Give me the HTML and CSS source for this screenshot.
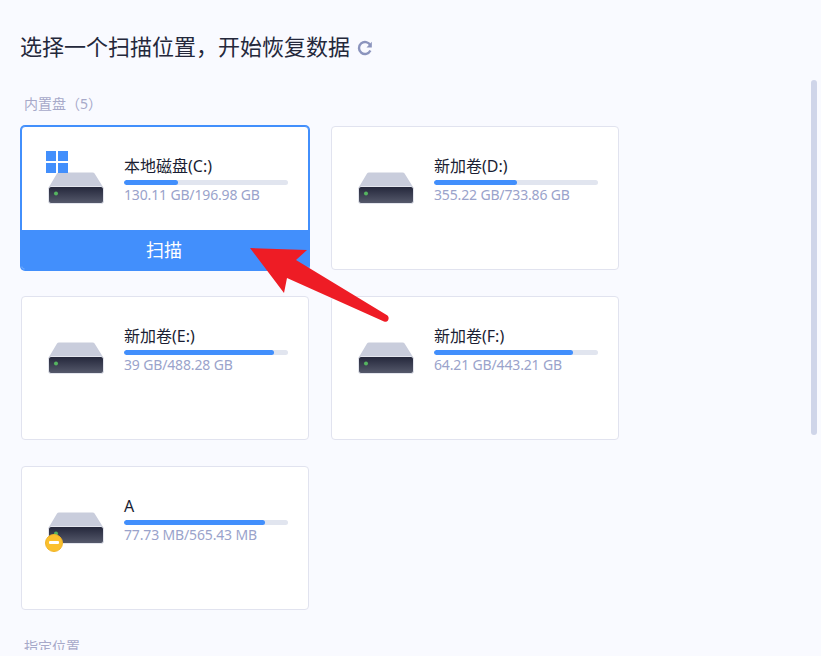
FILE: index.html
```html
<!DOCTYPE html>
<html lang="zh-CN">

<head>
    <meta charset="UTF-8">
    <title>选择一个扫描位置</title>
    <link rel="stylesheet" href="styles.css">
</head>

<body>
    <svg width="0" height="0" class="defs">
        <defs>
            <linearGradient id="driveFront" x1="0" y1="0" x2="0" y2="1">
                <stop offset="0" stop-color="#23263a" />
                <stop offset="1" stop-color="#565a6c" />
            </linearGradient>
            <symbol id="drive" viewBox="0 0 56 32">
                <path d="M9 1.5Q9.6 0.5 11 0.5H44.500Q46 0.5 46.600 1.500L55 15H1Z" fill="#c9cddc" />
                <rect x="0.500" y="14.500" width="55" height="17" rx="2.500" fill="url(#driveFront)" stroke="#e4e6ee" />
                <circle cx="8" cy="21.500" r="2" fill="#55b45f" />
            </symbol>
        </defs>
    </svg>

    <main class="page">
        <h1 class="title">选择一个扫描位置，开始恢复数据
            <svg class="refresh" width="16" height="16" viewBox="0 0 16 16">
                <path d="M13.300 5.200A6 6 0 1 0 13.400 10.600" fill="none" stroke="#8b94bd" stroke-width="2.400" />
                <path d="M14.800 1.800V7.400H9.500Z" fill="#8b94bd" />
            </svg>
        </h1>

        <h2 class="group-label">内置盘（5）</h2>
        <div class="drive-grid">
            <div class="card selected">
                <div class="card-body">
                    <div class="drive-icon">
                        <svg class="win-logo" width="22" height="22" viewBox="0 0 22 22">
                            <path d="M0 0H10V10H0ZM12 0H22V10H12ZM0 12H10V22H0ZM12 12H22V22H12Z" fill="#428ffc" />
                        </svg>
                        <svg width="56" height="32"><use href="#drive" /></svg>
                    </div>
                    <div class="drive-info">
                        <div class="drive-name">本地磁盘(C:)</div>
                        <div class="bar"><div class="bar-fill" style="width: 33%"></div></div>
                        <div class="drive-size">130.11 GB/196.98 GB</div>
                    </div>
                </div>
                <button class="scan-btn">扫描</button>
            </div>

            <div class="card">
                <div class="card-body">
                    <div class="drive-icon"><svg width="56" height="32"><use href="#drive" /></svg></div>
                    <div class="drive-info">
                        <div class="drive-name">新加卷(D:)</div>
                        <div class="bar"><div class="bar-fill" style="width: 50.500%"></div></div>
                        <div class="drive-size">355.22 GB/733.86 GB</div>
                    </div>
                </div>
            </div>

            <div class="card">
                <div class="card-body">
                    <div class="drive-icon"><svg width="56" height="32"><use href="#drive" /></svg></div>
                    <div class="drive-info">
                        <div class="drive-name">新加卷(E:)</div>
                        <div class="bar"><div class="bar-fill" style="width: 91.500%"></div></div>
                        <div class="drive-size">39 GB/488.28 GB</div>
                    </div>
                </div>
            </div>

            <div class="card">
                <div class="card-body">
                    <div class="drive-icon"><svg width="56" height="32"><use href="#drive" /></svg></div>
                    <div class="drive-info">
                        <div class="drive-name">新加卷(F:)</div>
                        <div class="bar"><div class="bar-fill" style="width: 85%"></div></div>
                        <div class="drive-size">64.21 GB/443.21 GB</div>
                    </div>
                </div>
            </div>

            <div class="card">
                <div class="card-body">
                    <div class="drive-icon">
                        <svg width="56" height="32"><use href="#drive" /></svg>
                        <span class="warn-badge"></span>
                    </div>
                    <div class="drive-info">
                        <div class="drive-name">A</div>
                        <div class="bar"><div class="bar-fill" style="width: 86%"></div></div>
                        <div class="drive-size">77.73 MB/565.43 MB</div>
                    </div>
                </div>
            </div>
        </div>

        <h2 class="group-label next">指定位置</h2>
    </main>

    <div class="scrollbar"></div>

    <svg class="arrow" width="821" height="656" viewBox="0 0 821 656">
        <path d="M250 248L307 250L296 260L387.500 315.500Q389.500 317.500 388 320.500Q386.500 322.500 384 321.500L287 278L284 293Z" fill="#ee1c25" />
    </svg>
</body>

</html>
```

FILE: styles.css
```css
* {
    margin: 0;
    padding: 0;
    box-sizing: border-box;
}

html,
body {
    height: 100%;
    overflow: hidden;
}

body {
    background: #f9faff;
    font-family: "Noto Sans", "Noto Sans CJK SC", sans-serif;
}

.defs {
    position: absolute;
}

/* content stops a little above the window bottom */
.page {
    height: 650px;
    overflow: hidden;
    padding: 31px 0 0 21px;
}

.title {
    display: flex;
    align-items: center;
    gap: 7px;
    height: 30px;
    margin-left: -1px;
    font-size: 22px;
    font-weight: 400;
    line-height: 30px;
    color: #24283b;
}

.refresh {
    margin-top: 3px;
}

.group-label {
    height: 20px;
    margin: 33px 0 12px 3px;
    font-size: 14px;
    font-weight: 400;
    line-height: 20px;
    color: #a7a9c9;
}

.group-label.next {
    margin-top: 27px;
}

.drive-grid {
    display: grid;
    grid-template-columns: 288px 288px;
    grid-auto-rows: 144px;
    gap: 26px 22px;
}

.card {
    display: flex;
    flex-direction: column;
    border: 1px solid #e1e3ef;
    border-radius: 4px;
    background: #fff;
    overflow: hidden;
}

.card.selected {
    border-color: #428ffc;
    box-shadow: 0 0 0 1px #428ffc;
}

.card-body {
    flex: 1;
    display: flex;
    padding: 29px 20px 0 26px;
}

.drive-icon {
    position: relative;
    width: 56px;
    height: 32px;
    margin: 16px 20px 0 0;
}

.drive-icon svg {
    display: block;
}

.win-logo {
    position: absolute;
    left: -2px;
    top: -21px;
}

.warn-badge {
    position: absolute;
    left: -3px;
    top: 22px;
    width: 18px;
    height: 18px;
    border-radius: 50%;
    background: #fbc02d;
    border: 1px solid #f0b429;
}

.warn-badge::after {
    content: "";
    position: absolute;
    left: 3px;
    top: 6px;
    width: 10px;
    height: 3px;
    border-radius: 1px;
    background: #fff;
}

.drive-info {
    flex: 1;
}

.drive-name {
    height: 20px;
    font-size: 16px;
    line-height: 21px;
    color: #1a1e33;
}

.bar {
    height: 5px;
    margin-top: 4px;
    border-radius: 3px;
    background: #e1e5ef;
    overflow: hidden;
}

.bar-fill {
    height: 100%;
    border-radius: 3px;
    background: #428ffc;
}

.drive-size {
    font-size: 14px;
    line-height: 20px;
    letter-spacing: -0.15px;
    color: #9aa3cb;
}

.scan-btn {
    height: 39px;
    padding: 0 2px 2px 0;
    border: none;
    background: #428ffc;
    color: #fff;
    font-family: inherit;
    font-size: 18px;
}

.scrollbar {
    position: absolute;
    left: 811px;
    top: 80px;
    width: 6px;
    height: 355px;
    border-radius: 3px;
    background: #cfd5e9;
}

.arrow {
    position: absolute;
    left: 0;
    top: 0;
    pointer-events: none;
}
```
